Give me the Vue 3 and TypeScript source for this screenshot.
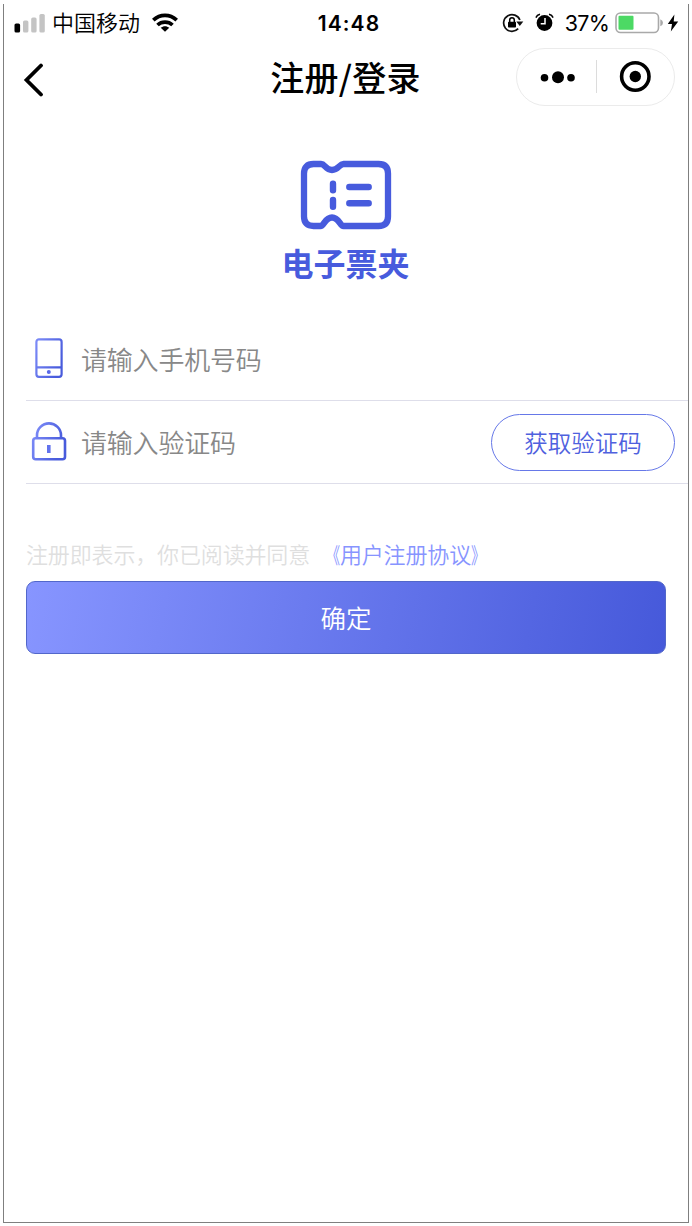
<script setup lang="ts">
import { ref } from 'vue'

const phone = ref('')
const code = ref('')
</script>

<template>
  <div class="screen">
    <header class="status">
      <div class="carrier">
        <svg class="signal" width="32" height="20" viewBox="0 0 32 20">
          <rect x="0.5" y="10.5" width="5.6" height="9" rx="1.6" fill="#000" />
          <rect x="9" y="7.5" width="5.4" height="12" rx="1.6" fill="#c4c4c4" />
          <rect x="17.2" y="4.5" width="5.4" height="15" rx="1.6" fill="#c4c4c4" />
          <rect x="25.4" y="1" width="5.4" height="18.5" rx="1.6" fill="#c4c4c4" />
        </svg>
        <span class="carrier-name">中国移动</span>
        <svg class="wifi" width="26" height="20" viewBox="0 0 26 20">
          <g fill="none" stroke="#000" stroke-width="3.7">
            <path d="M1.300 7.200C8 .8 18 .8 24.700 7.200" />
            <path d="M5.500 12C9.700 8.100 16.300 8.100 20.500 12" />
          </g>
          <path d="M8.700 14.800C11.300 12.600 14.700 12.600 17.300 14.800L13 18.800Z" fill="#000" />
        </svg>
      </div>
      <span class="time">14:48</span>
      <div class="indicators">
        <svg class="rotation" width="22" height="20" viewBox="0 0 22 20">
          <path d="M17.900 7A8.400 8.400 0 1 0 16.200 15.700" fill="none" stroke="#111" stroke-width="1.700" />
          <path d="M14.300 8.600H21.300L17.800 12.900Z" fill="#111" />
          <rect x="6" y="8.700" width="8" height="5.800" rx=".8" fill="#000" />
          <path d="M7.700 9V7.100A2.300 2.300 0 0 1 12.300 7.100V9" fill="none" stroke="#000" stroke-width="1.500" />
        </svg>
        <svg class="alarm" width="19" height="19" viewBox="0 0 19 19">
          <circle cx="9.500" cy="10" r="7.900" fill="#000" />
          <path d="M.9 4.600Q2 1.900 5 1.200M18.100 4.600Q17 1.900 14 1.200" fill="none" stroke="#000" stroke-width="1.500" />
          <path d="M10 5V10.700H5.700" fill="none" stroke="#fff" stroke-width="1.500" />
        </svg>
        <span class="percent">37%</span>
        <svg class="battery" width="49" height="22" viewBox="0 0 49 22">
          <rect x="1" y="1" width="42.500" height="19.500" rx="4.500" fill="#fff" stroke="#a9a9a9" stroke-width="1.600" />
          <rect x="3.500" y="3.700" width="15" height="14" rx="1" fill="#4cd964" />
          <path d="M45.300 7.300Q48 8.300 48 10.800T45.300 14.300Z" fill="#a9a9a9" />
        </svg>
        <svg class="bolt" width="12" height="18" viewBox="0 0 12 18">
          <path d="M7.400 .5L.8 9.900H5L3.800 17.500L11.200 7.400H6.700Z" fill="#000" />
        </svg>
      </div>
    </header>

    <nav class="nav">
      <svg class="back" width="22" height="34" viewBox="0 0 22 34">
        <path d="M18 2.500L3.500 17L18 31.500" fill="none" stroke="#000" stroke-width="3.800" stroke-linecap="round" />
      </svg>
      <h1 class="title">注册/登录</h1>
      <div class="capsule">
        <svg width="160" height="58" viewBox="0 0 160 58">
          <circle cx="28.500" cy="29.800" r="3.800" />
          <circle cx="42" cy="29.300" r="6" />
          <circle cx="55" cy="29.800" r="3.800" />
          <path d="M80.500 12V45" stroke="#dcdcdc" />
          <circle cx="119.300" cy="28.500" r="13.700" fill="none" stroke="#000" stroke-width="3.600" />
          <circle cx="119.300" cy="28.500" r="5.700" />
        </svg>
      </div>
    </nav>

    <section class="brand">
      <svg width="92" height="70" viewBox="0 0 92 70">
        <path
          d="M13.500 4H21C25 4 25.500 10 32 10S39 4 43.500 4H78.500Q88 4 88 13.500V56.500Q88 66 78.500 66H43.500C40 66 39 57.500 32 57.500S24 66 20.500 66H13.500Q4 66 4 56.500V13.500Q4 4 13.500 4Z"
          fill="none" stroke="#475bdd" stroke-width="6.300" stroke-linejoin="round"
        />
        <path d="M33 23.700V30.300M33 40V46.700M49.300 27H68.700M49.300 43.300H68.700" fill="none" stroke="#475bdd" stroke-width="6.400" stroke-linecap="round" />
      </svg>
      <strong class="brand-name">电子票夹</strong>
    </section>

    <form class="form" @submit.prevent>
      <label class="row">
        <svg class="row-icon" width="46" height="44" viewBox="0 0 46 44">
          <defs>
            <linearGradient id="ink" gradientUnits="userSpaceOnUse" x1="6" y1="0" x2="40" y2="12">
              <stop offset="0" stop-color="#8593fc" />
              <stop offset="1" stop-color="#485bdc" />
            </linearGradient>
          </defs>
          <rect x="10.400" y="3.400" width="25.200" height="37.400" rx="2.500" fill="none" stroke="url(#ink)" stroke-width="2.200" />
          <path d="M10 31.300L36 31.301" stroke="url(#ink)" stroke-width="2.200" />
          <circle cx="22.800" cy="36" r="2" fill="#5969e9" />
        </svg>
        <input v-model="phone" class="field" type="tel" placeholder="请输入手机号码" />
      </label>
      <div class="row">
        <svg class="row-icon" width="46" height="44" viewBox="0 0 46 44">
          <rect x="7.200" y="19.200" width="31.800" height="21" rx="2.500" fill="none" stroke="url(#ink)" stroke-width="2.600" />
          <path d="M11 19V16.200A12 11.800 0 0 1 35 16.200V19" fill="none" stroke="url(#ink)" stroke-width="2.600" />
          <path d="M22.800 26V34" stroke="#6273ed" stroke-width="3.600" />
        </svg>
        <input v-model="code" class="field" placeholder="请输入验证码" />
        <button class="get-code" type="button">获取验证码</button>
      </div>
      <p class="terms">注册即表示，你已阅读并同意<a class="agreement"><span class="mark open">《</span>用户注册协议<span class="mark close">》</span></a></p>
      <button class="submit" type="submit">确定</button>
    </form>
  </div>
</template>

<style>
body {
  background: #fff;
}
</style>

<style scoped>
.screen {
  box-sizing: border-box;
  width: 686px;
  height: 1219px;
  margin: 4px 0 0 3px;
  border: 1px solid #7f7f7f;
  border-top: 0;
  overflow: hidden;
  background: #fff;
  color: #000;
  font-family: "Noto Sans CJK SC", sans-serif;
}
svg {
  display: block;
  flex: none;
}
.status {
  display: grid;
  grid-template-columns: 1fr auto 1fr;
  height: 38px;
  padding: 0 9px 0 10px;
  align-items: center;
}
.carrier,
.indicators {
  display: flex;
  align-items: center;
}
.indicators {
  justify-content: flex-end;
}
.carrier-name {
  margin: 0 0 4px 6px;
  font-size: 22px;
  font-weight: 350;
  line-height: 32px;
}
.wifi {
  margin: 0 0 1px 12px;
}
.time {
  margin: 1px 0 0 5px;
  font: 600 21px/32px Inter, sans-serif;
  letter-spacing: 1.1px;
}
.alarm {
  margin: 0 0 2px 11px;
}
.percent {
  margin: 0 6px 0 11px;
  font: 400 21.500px/32px Inter, sans-serif;
  letter-spacing: -0.8px;
}
.bolt {
  margin-left: 3px;
}
.nav {
  display: grid;
  grid-template-columns: 1fr auto 1fr;
  height: 66px;
  margin-top: -2px;
  padding: 0 13px 0 19px;
  align-items: center;
}
.back {
  margin-top: 14px;
}
.title {
  margin: 7px 7px 0 0;
  font-size: 34px;
  font-weight: 500;
  letter-spacing: 0.2px;
  line-height: 50px;
}
.capsule {
  box-sizing: border-box;
  width: 159px;
  height: 58px;
  border: 1px solid #ebebeb;
  border-radius: 29px;
  justify-self: end;
  margin-top: 8px;
}
.capsule svg {
  margin: -1px;
}
.brand {
  display: flex;
  flex-direction: column;
  align-items: center;
  padding-top: 54px;
}
.brand-name {
  margin: 8px 1px 1px 0;
  color: #475bdd;
  font-size: 32px;
  font-weight: 700;
  line-height: 48px;
}
.form {
  display: flex;
  flex-direction: column;
  margin: 31px 0 0 22px;
}
.row {
  display: flex;
  box-sizing: border-box;
  height: 83px;
  padding-right: 13px;
  align-items: center;
  border-bottom: 1px solid #dedeea;
}
.row-icon {
  margin-bottom: 2px;
}
.field {
  flex: 1;
  min-width: 0;
  margin: 0 0 0 9px;
  padding: 0;
  border: 0;
  outline: 0;
  background: none;
  font: 350 26px/38px "Noto Sans CJK SC", sans-serif;
  letter-spacing: -0.2px;
}
.field::placeholder {
  color: #888;
  opacity: 1;
}
.get-code {
  box-sizing: border-box;
  width: 184px;
  height: 57px;
  padding: 0;
  border: 1px solid #6678e8;
  border-radius: 29px;
  background: #fff;
  color: #4f61de;
  font: 350 23.500px/34px "Noto Sans CJK SC", sans-serif;
}
.terms {
  display: flex;
  margin: 53px 0 12px;
  color: #dfdfdf;
  font-size: 22px;
  font-weight: 350;
  letter-spacing: -0.15px;
  line-height: 32px;
}
.agreement {
  margin-left: 8px;
  color: #8794ff;
}
.mark {
  display: inline-block;
}
.open {
  transform: scaleX(0.65);
  transform-origin: right;
}
.close {
  transform: scaleX(0.65);
  transform-origin: left;
}
.submit {
  box-sizing: border-box;
  width: 640px;
  height: 73px;
  padding: 0 0 1px;
  border: 1px solid #5267ca;
  border-radius: 9px;
  background: linear-gradient(100deg, #8795ff, #4659da);
  color: #fff;
  font: 350 25.500px/38px "Noto Sans CJK SC", sans-serif;
}
</style>
